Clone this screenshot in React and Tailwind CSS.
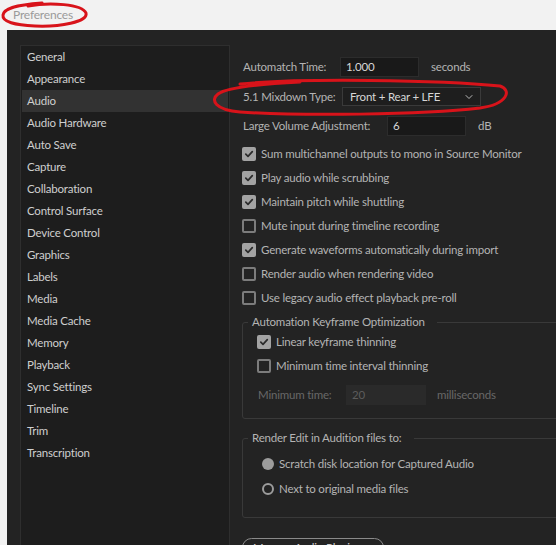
import { ChevronDown } from 'lucide-react'

const sections = [
  'General', 'Appearance', 'Audio', 'Audio Hardware', 'Auto Save', 'Capture',
  'Collaboration', 'Control Surface', 'Device Control', 'Graphics', 'Labels',
  'Media', 'Media Cache', 'Memory', 'Playback', 'Sync Settings', 'Timeline',
  'Trim', 'Transcription',
]

const options = [
  { label: 'Sum multichannel outputs to mono in Source Monitor', on: true },
  { label: 'Play audio while scrubbing', on: true },
  { label: 'Maintain pitch while shuttling', on: true },
  { label: 'Mute input during timeline recording', on: false },
  { label: 'Generate waveforms automatically during import', on: true },
  { label: 'Render audio when rendering video', on: false },
  { label: 'Use legacy audio effect playback pre-roll', on: false },
]

function Check({ on }) {
  if (!on) {
    return <span className="w-[14px] h-[14px] rounded-[2px] border-2 border-[#7c7c7c] flex-shrink-0" />
  }
  return (
    <span className="w-[14px] h-[14px] rounded-[2px] bg-[#a3a3a3] flex items-center justify-center flex-shrink-0">
      <svg width="10" height="10" viewBox="0 0 10 10" fill="none">
        <path d="M1.8 5.2 L4 7.4 L8.3 2.6" stroke="#2b2b2b" strokeWidth="1.7" strokeLinecap="round" strokeLinejoin="round" />
      </svg>
    </span>
  )
}

function Radio({ on }) {
  return on
    ? <span className="w-[12px] h-[12px] rounded-full bg-[#9c9c9c] flex-shrink-0" />
    : <span className="w-[12px] h-[12px] rounded-full border-2 border-[#9c9c9c] flex-shrink-0" />
}

export default function App() {
  return (
    <div className="relative w-[556px] h-[545px] overflow-hidden bg-[#f2f2f2] text-[11.5px] tracking-[-0.2px] whitespace-nowrap font-['Lato',sans-serif]">
      {/* Title strip */}
      <div className="h-[30px] pl-[13px] flex items-center text-[#9a9a9a] text-[12px]">Preferences</div>

      {/* Dialog body */}
      <div className="ml-[7px] h-[515px] bg-[#232323] flex pt-[15px] pl-[13px]">
        {/* Section list */}
        <aside className="w-[210px] flex-shrink-0 bg-[#1d1d1d] border border-[#2e2e2e] border-b-0 p-[1px] pt-0">
          {sections.map(s => (
            <div
              key={s}
              className={`h-[22px] flex items-center pl-[5px] text-[#cfcfcf] ${s === 'Audio' ? 'bg-[#323232]' : ''}`}
            >
              {s}
            </div>
          ))}
        </aside>

        {/* Audio settings */}
        <main className="ml-[12px] flex-1 flex flex-col text-[#b4b4b4]">
          <div className="mt-[12px] h-[20px] flex items-center">
            <span className="w-[98px] pl-[1px]">Automatch Time:</span>
            <span className="w-[79px] h-[20px] bg-[#191919] border border-[#2c2c2c] flex items-center pl-[5px] text-[#d6d6d6]">1.000</span>
            <span className="ml-[12px]">seconds</span>
          </div>

          <div className="mt-[10px] h-[20px] flex items-center">
            <span className="w-[100px] pl-[1px]">5.1 Mixdown Type:</span>
            <span className="w-[139px] h-[19px] bg-[#1e1e1e] border border-[#3a3a3a] flex items-center pl-[7px] pr-[5px] text-[#d6d6d6]">
              <span className="flex-1">Front + Rear + LFE</span>
              <ChevronDown className="w-[12px] h-[12px] text-[#b8b8b8]" strokeWidth={2} />
            </span>
          </div>

          <div className="mt-[10px] h-[20px] flex items-center">
            <span className="w-[145px] pl-[1px]">Large Volume Adjustment:</span>
            <span className="w-[79px] h-[20px] bg-[#191919] border border-[#2c2c2c] flex items-center pl-[5px] text-[#d6d6d6]">6</span>
            <span className="ml-[12px]">dB</span>
          </div>

          <div className="mt-[6px] flex flex-col">
            {options.map(o => (
              <label key={o.label} className="h-[24px] flex items-center gap-[5px]">
                <Check on={o.on} />
                <span>{o.label}</span>
              </label>
            ))}
          </div>

          <fieldset className="mt-[4px] w-[340px] border border-[#393939] rounded-[3px] pb-[12px]">
            <legend className="ml-[5px] pl-[4px] pr-[12px] h-[16px] leading-[16px]">Automation Keyframe Optimization</legend>
            <div className="pl-[14px]">
              <label className="h-[24px] flex items-center gap-[5px]">
                <Check on />
                <span>Linear keyframe thinning</span>
              </label>
              <label className="h-[24px] flex items-center gap-[5px]">
                <Check on={false} />
                <span>Minimum time interval thinning</span>
              </label>
              <div className="mt-[6px] h-[22px] flex items-center text-[#686868]">
                <span className="w-[89px] pl-[1px]">Minimum time:</span>
                <span className="w-[80px] h-[20px] bg-[#2a2a2a] flex items-center pl-[6px] text-[#5c5c5c]">20</span>
                <span className="ml-[11px]">milliseconds</span>
              </div>
            </div>
          </fieldset>

          <fieldset className="mt-[11px] w-[340px] border border-[#393939] rounded-[3px] pb-[16px]">
            <legend className="ml-[5px] pl-[4px] pr-[12px] h-[16px] leading-[16px]">Render Edit in Audition files to:</legend>
            <div className="pl-[19px]">
              <label className="mt-[6px] h-[24px] flex items-center gap-[5px]">
                <Radio on />
                <span>Scratch disk location for Captured Audio</span>
              </label>
              <label className="mt-[1px] h-[24px] flex items-center gap-[5px]">
                <Radio on={false} />
                <span>Next to original media files</span>
              </label>
            </div>
          </fieldset>

          <div className="mt-[11px] h-[2px] bg-[#333333] w-[340px]" />

          <button className="mt-[9px] self-start w-[142px] h-[24px] rounded-full border border-[#8a8a8a] text-[#cfcfcf] pl-[10px] text-left">
            Manage Audio Plugins...
          </button>
        </main>
      </div>

      {/* Red annotation marks */}
      <svg className="absolute inset-0 pointer-events-none" width="556" height="545" fill="none">
        <path
          d="M28 6 C50 2, 82 4, 86 13 C88 22, 60 27, 35 26 C15 25, 2 22, 3 15 C4 9, 14 5, 42 3"
          stroke="#d8131a" strokeWidth="3" strokeLinecap="round"
        />
        <path
          d="M240 84 C300 78, 440 80, 500 86 C512 90, 508 104, 480 108 C420 115, 300 116, 240 112 C215 110, 210 100, 218 94 C226 88, 260 84, 300 82"
          stroke="#d8131a" strokeWidth="3" strokeLinecap="round"
        />
      </svg>
    </div>
  )
}
